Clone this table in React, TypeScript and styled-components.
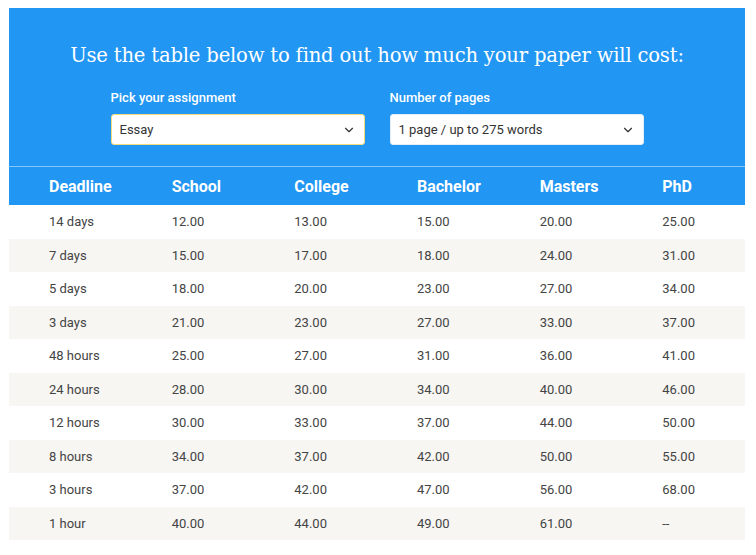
import React from 'react'
import styled, { createGlobalStyle } from 'styled-components'
import { ChevronDown } from 'lucide-react'

const GlobalStyle = createGlobalStyle`
  body {
    margin: 0;
    background: #fff;
    font-family: Roboto, "Liberation Sans", Arial, sans-serif;
  }
`

const columns = ['Deadline', 'School', 'College', 'Bachelor', 'Masters', 'PhD']

const rows: string[][] = [
  ['14 days', '12.00', '13.00', '15.00', '20.00', '25.00'],
  ['7 days', '15.00', '17.00', '18.00', '24.00', '31.00'],
  ['5 days', '18.00', '20.00', '23.00', '27.00', '34.00'],
  ['3 days', '21.00', '23.00', '27.00', '33.00', '37.00'],
  ['48 hours', '25.00', '27.00', '31.00', '36.00', '41.00'],
  ['24 hours', '28.00', '30.00', '34.00', '40.00', '46.00'],
  ['12 hours', '30.00', '33.00', '37.00', '44.00', '50.00'],
  ['8 hours', '34.00', '37.00', '42.00', '50.00', '55.00'],
  ['3 hours', '37.00', '42.00', '47.00', '56.00', '68.00'],
  ['1 hour', '40.00', '44.00', '49.00', '61.00', '--'],
]

const App: React.FC = () => {
  return (
    <>
      <GlobalStyle />
      <Page>
        <Panel>
          <Title>Use the table below to find out how much your paper will cost:</Title>
          <Fields>
            <Field>
              <Label>Pick your assignment</Label>
              <Select focused>
                <span>Essay</span>
                <ChevronDown size={14} strokeWidth={2} color="#333" />
              </Select>
            </Field>
            <Field>
              <Label>Number of pages</Label>
              <Select>
                <span>1 page / up to 275 words</span>
                <ChevronDown size={14} strokeWidth={2} color="#333" />
              </Select>
            </Field>
          </Fields>
        </Panel>
        <Table>
          <thead>
            <HeadRow>
              {columns.map((c) => (
                <HeadCell key={c}>{c}</HeadCell>
              ))}
            </HeadRow>
          </thead>
          <tbody>
            {rows.map((r, i) => (
              <Row key={i} striped={i % 2 === 1}>
                {r.map((v, j) => (
                  <Cell key={j}>{v}</Cell>
                ))}
              </Row>
            ))}
          </tbody>
        </Table>
      </Page>
    </>
  )
}

const Page = styled.div`
  width: 736px;
  margin: 8px 0 0 9px;
`

const Panel = styled.div`
  background: #2196f3;
  padding: 35px 0 21px;
  border-bottom: 1px solid #84c7fa;
  display: flex;
  flex-direction: column;
  align-items: center;
`

const Title = styled.h1`
  margin: 0;
  color: #fff;
  font-family: "DejaVu Serif", "Liberation Serif", serif;
  font-weight: 400;
  font-size: 19.6px;
  line-height: 26px;
  letter-spacing: -0.2px;
`

const Fields = styled.div`
  display: flex;
  gap: 25px;
  margin-top: 21px;
`

const Field = styled.div`
  display: flex;
  flex-direction: column;
  width: 254px;
`

const Label = styled.label`
  color: #fff;
  font-size: 13px;
  font-weight: 500;
  line-height: 16px;
  margin-bottom: 8px;
`

const Select = styled.div<{ focused?: boolean }>`
  box-sizing: border-box;
  height: 31px;
  background: #fff;
  border: 1px solid ${(p) => (p.focused ? '#f3dc77' : '#e6eef5')};
  border-radius: 3px;
  display: flex;
  align-items: center;
  justify-content: space-between;
  padding: 0 8px 0 8px;
  font-size: 13px;
  color: #333;
`

const Table = styled.table`
  width: 100%;
  border-collapse: collapse;
  table-layout: fixed;
`

const HeadRow = styled.tr`
  background: #2196f3;
  height: 38px;
`

const HeadCell = styled.th`
  text-align: left;
  padding: 0 0 0 40px;
  color: #fff;
  font-size: 16px;
  font-weight: 700;
`

const Row = styled.tr<{ striped: boolean }>`
  height: 33.5px;
  background: ${(p) => (p.striped ? '#f7f6f3' : '#fff')};
`

const Cell = styled.td`
  padding: 0 0 0 40px;
  color: #444;
  font-size: 13px;
`

export default App
